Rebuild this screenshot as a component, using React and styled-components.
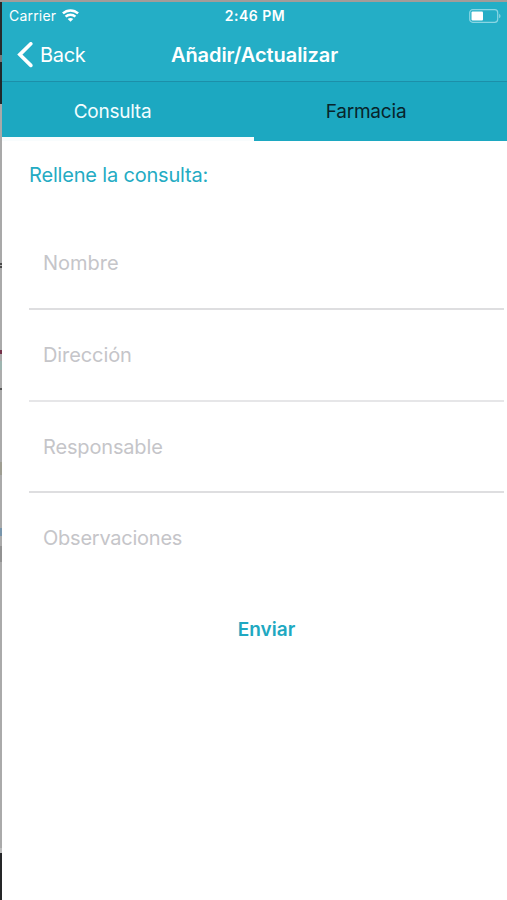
import React from "react";
import styled, { createGlobalStyle } from "styled-components";

const GlobalStyle = createGlobalStyle`
  * { box-sizing: border-box; }
  body {
    margin: 0;
    background: #fff;
    font-family: Inter, "Liberation Sans", sans-serif;
    overflow: hidden;
  }
`;

const Window = styled.div`
  display: grid;
  grid-template-columns: 2px 1fr;
  grid-template-rows: 2px 898px;
  height: 900px;
`;

const TopEdge = styled.div`
  grid-column: 1 / 3;
  background: #a39c99;
`;

const LeftEdge = styled.div`
  background: linear-gradient(
    #262b2d 0 53px, #77797a 53px 60px, #20282b 60px 102px,
    #a9a9a9 102px 261px, #4b4b4b 261px 263px, #b0b0b0 263px 264px,
    #4b4b4b 264px 266px, #aaaaaa 266px 348px, #74324a 348px 352px,
    #aaaaaa 352px 359px, #9eb5b0 359px 368px, #adadad 368px 386px,
    #555 386px 388px, #aaa 388px 460px, #9e9d91 460px 473px,
    #aaa 473px 526px, #7895ab 526px 534px, #aaa 534px 544px,
    #929292 544px 560px, #aaa 560px 846px, #bdbdbd 846px 851px,
    #252628 851px 898px
  );
`;

const Phone = styled.main`
  display: flex;
  flex-direction: column;
  background: #fff;
  min-width: 0;
`;

const Header = styled.header`
  height: 80px;
  background: #24aec6;
  border-bottom: 1px solid #1c8fa9;
  color: #fff;
`;

const Bar = styled.div`
  display: grid;
  grid-template-columns: 1fr auto 1fr;
  align-items: center;
  height: ${(p) => p.$height}px;
  padding: ${(p) => p.$padding};
`;

const Group = styled.div`
  display: flex;
  align-items: center;
  gap: ${(p) => p.$gap || 0}px;
  justify-content: ${(p) => (p.$end ? "flex-end" : "flex-start")};
`;

const Label = styled.span`
  font-size: ${(p) => p.$size}px;
  font-weight: ${(p) => p.$weight || 400};
  letter-spacing: ${(p) => p.$spacing || 0}px;
  line-height: 24px;
  white-space: nowrap;
`;

const BackButton = styled.button`
  display: flex;
  align-items: center;
  gap: 7px;
  border: 0;
  padding: 0;
  background: none;
  color: #fff;
  font-family: inherit;
`;

const Tabs = styled.nav`
  display: flex;
  height: 59px;
  background: #1ca8c1;
`;

const Tab = styled.button`
  width: ${(p) => p.$width};
  border: 0;
  border-bottom: 4px solid ${(p) => (p.$active ? "#f8fcfd" : "transparent")};
  padding: 4px ${(p) => p.$right || 0}px 0 0;
  background: none;
  color: ${(p) => (p.$active ? "#f2fdff" : "#08242b")};
  font-family: inherit;
`;

const Form = styled.form`
  display: flex;
  flex-direction: column;
  padding: 0 3px 0 27px;
`;

const Prompt = styled.h2`
  margin: 22px 0 0;
  height: 55px;
  color: #24abc3;
  font-weight: 400;
  line-height: 24px;
  display: flex;
`;

const Field = styled.input`
  width: 100%;
  height: ${(p) => p.$height}px;
  border: 0;
  border-bottom: 2px solid ${(p) => p.$line};
  border-radius: 0;
  padding: 0 14px;
  background: none;
  outline: none;
  font-family: inherit;
  font-size: 20px;
  letter-spacing: ${(p) => p.$spacing}px;
  &::placeholder { color: #c5c5c9; opacity: 1; }
`;

const Submit = styled.button`
  align-self: center;
  margin: 33px 0 0;
  border: 0;
  padding: 0;
  background: none;
  color: #20a8c1;
  font-family: inherit;
`;

const Wifi = () => (
  <svg width="17" height="13" viewBox="0 0 17 13" fill="none" stroke="#fff" strokeWidth="2.5">
    <path d="M.9 4.4C5.2 .4 11.8 .4 16.1 4.4" />
    <path d="M3.6 7.6c2.7-2.5 7.1-2.5 9.8 0" />
    <path d="M8.5 12.8 5.7 10c1.6-1.3 4-1.3 5.6 0Z" fill="#fff" stroke="none" />
  </svg>
);

const Battery = () => (
  <svg width="32" height="14" viewBox="0 0 32 14" fill="none">
    <rect x=".7" y=".7" width="28" height="12.6" rx="3" stroke="#8ad6e3" strokeWidth="1.2" />
    <rect x="2.5" y="2.5" width="11.5" height="9" rx="1" fill="#fff" />
    <path d="M30.3 4.7c1.5.7 1.5 3.9 0 4.6Z" fill="#a2dfe8" />
  </svg>
);

const Chevron = () => (
  <svg width="16" height="26" viewBox="0 0 16 26" fill="none" stroke="#fff" strokeWidth="3.6" strokeLinecap="round">
    <path d="M13.8 1.8 2.8 12.6l11 10.8" />
  </svg>
);

const FIELDS = [
  { name: "Nombre", height: 92, spacing: 0, line: "#dedee0" },
  { name: "Dirección", height: 92, spacing: -0.1, line: "#e6e6e8" },
  { name: "Responsable", height: 91, spacing: -0.16, line: "#dedee0" },
  { name: "Observaciones", height: 92, spacing: -0.24, line: "transparent" },
];

export default function App() {
  return (
    <Window>
      <GlobalStyle />
      <TopEdge />
      <LeftEdge />
      <Phone>
        <Header>
          <Bar $height={27} $padding="0 6px 0 7px">
            <Group $gap={6}>
              <Label $size={14} $spacing={0.2}>Carrier</Label>
              <Wifi />
            </Group>
            <Label $size={14} $weight={600} $spacing={0.5}>2:46 PM</Label>
            <Group $end>
              <Battery />
            </Group>
          </Bar>
          <Bar $height={51} $padding="0 15px">
            <BackButton>
              <Chevron />
              <Label $size={20} $spacing={-0.3}>Back</Label>
            </BackButton>
            <Label $size={20} $weight={600} $spacing={-0.07}>Añadir/Actualizar</Label>
          </Bar>
        </Header>
        <Tabs>
          <Tab $active $width="252px" $right={31}>
            <Label $size={19} $spacing={-0.25}>Consulta</Label>
          </Tab>
          <Tab $width="253px" $right={29}>
            <Label $size={19} $spacing={-0.2}>Farmacia</Label>
          </Tab>
        </Tabs>
        <Form>
          <Prompt><Label $size={20} $spacing={-0.18}>Rellene la consulta:</Label></Prompt>
          {FIELDS.map((f) => (
            <Field
              key={f.name}
              placeholder={f.name}
              $height={f.height}
              $spacing={f.spacing}
              $line={f.line}
            />
          ))}
          <Submit type="button"><Label $size={19} $weight={600}>Enviar</Label></Submit>
        </Form>
      </Phone>
    </Window>
  );
}
